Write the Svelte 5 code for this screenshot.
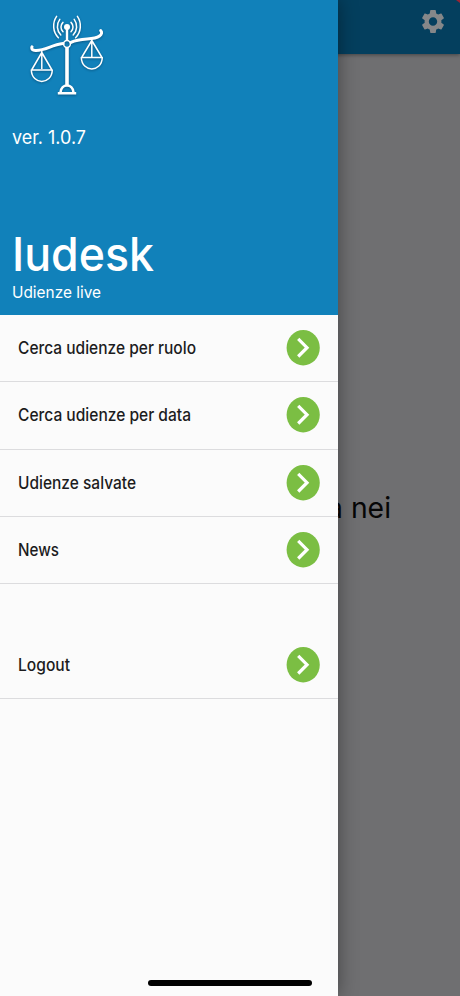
<script lang="ts">
  // Side drawer of the app, open over the dimmed home page.

  type MenuItem = {
    label: string;
    width: number;
    spaced?: boolean;
  };

  const version = "1.0.7";

  // width = rendered label width, the labels are set slightly condensed
  const items: MenuItem[] = [
    { label: "Cerca udienze per ruolo", width: 178 },
    { label: "Cerca udienze per data", width: 173 },
    { label: "Udienze salvate", width: 118 },
    { label: "News", width: 41 },
    { label: "Logout", width: 52, spaced: true },
  ];
</script>

{#snippet line(text: string, width: number, height: number, baseline: number)}
  <svg class="line" {width} {height} aria-label={text}>
    <text x="0" y={baseline} textLength={width} lengthAdjust="spacingAndGlyphs">{text}</text>
  </svg>
{/snippet}

<div class="screen">
  <div class="page">
    <header class="appbar">
      <svg class="gear" width="28" height="29" viewBox="0 0 24 24" preserveAspectRatio="none" aria-hidden="true">
        <path
          d="M19.14 12.94c.04-.3.06-.61.06-.94s-.02-.64-.07-.94l2.03-1.58c.18-.14.23-.41.12-.61l-1.92-3.32c-.12-.22-.37-.29-.59-.22l-2.39.96c-.5-.38-1.03-.7-1.62-.94l-.36-2.54c-.04-.24-.24-.41-.48-.41h-3.84c-.24 0-.43.17-.47.41l-.36 2.54c-.59.24-1.13.57-1.62.94l-2.39-.96c-.22-.08-.47 0-.59.22L2.74 8.87c-.12.21-.08.47.12.61l2.03 1.58c-.05.3-.09.63-.09.94s.02.64.07.94l-2.03 1.58c-.18.14-.23.41-.12.61l1.92 3.32c.12.22.37.29.59.22l2.39-.96c.5.38 1.03.7 1.62.94l.36 2.54c.05.24.24.41.48.41h3.84c.24 0 .44-.17.47-.41l.36-2.54c.59-.24 1.13-.56 1.62-.94l2.39.96c.22.08.47 0 .59-.22l1.92-3.32c.12-.22.07-.47-.12-.61l-2.01-1.58zM12 15.6c-1.98 0-3.6-1.62-3.6-3.6s1.62-3.6 3.6-3.6 3.6 1.62 3.6 3.6-1.62 3.6-3.6 3.6z"
        />
      </svg>
      <span class="corner"></span>
    </header>
    <div class="message">{@render line("a nei", 64, 40, 30)}</div>
  </div>

  <aside class="drawer">
    <div class="head">
      <svg class="logo" width="76" height="84" viewBox="0 0 76 84" fill="none" stroke="#fff" aria-hidden="true">
        <!-- signal waves -->
        <g stroke-width="1.5" stroke-linecap="round">
          <path d="M33 7.4a6.5 6.5 0 0 0 0 9.4M29.8 4.4a12 12 0 0 0 1 15.6M26.6 1.4a17 17 0 0 0 1.8 21.4" />
          <path d="M41 7.4a6.5 6.5 0 0 1 0 9.4M44.2 4.4a12 12 0 0 1-1 15.6M47.4 1.4a17 17 0 0 1-1.8 21.4" />
        </g>
        <circle cx="37" cy="12" r="3" fill="#fff" stroke="none" />
        <path d="M37 13v13" stroke-width="2.4" />
        <!-- beam -->
        <path
          d="M2 31.8c-.8 2.2.6 3.6 3.2 3.6C15 36 21 30 33 28.6"
          stroke-width="3"
          stroke-linecap="round"
        />
        <path
          d="M41 27.4c11-5.4 22-1.5 28.5-6.4 2.3-1.8 2.8-3.8 1.2-5.4"
          stroke-width="3"
          stroke-linecap="round"
        />
        <circle cx="37" cy="29" r="3.4" stroke-width="1.5" />
        <path d="M37 32.5V71" stroke-width="3.6" />
        <path d="M30.5 77.5c.8-9.4 12.2-9.4 13 0M27.8 78.2h18.4" stroke-width="2.6" />
        <!-- pans -->
        <g stroke-width="1.5" stroke-linejoin="round">
          <path d="M11.8 36v18M11.8 37.5 1.9 54.5M11.8 37.5l9.9 17M1.3 55h21c-.6 15.2-20.4 15.2-21 0z" />
          <path d="M61.8 24v18M61.8 25.5 51.9 42M61.8 25.5 71.7 42M51.3 42.5h21c-.6 15.2-20.4 15.2-21 0z" />
        </g>
      </svg>
      <div class="version">{@render line(`ver. ${version}`, 74, 24, 18.5)}</div>
      <div class="title">{@render line("Iudesk", 142, 55, 44)}</div>
      <div class="subtitle">{@render line("Udienze live", 89, 22, 16)}</div>
    </div>

    <nav>
      {#each items as item}
        <div class="item" class:spaced={item.spaced}>
          {@render line(item.label, item.width, 24, 17.8)}
          <svg class="go" width="34" height="36" viewBox="0 0 34 36" aria-hidden="true">
            <ellipse cx="17.2" cy="17.7" rx="16.6" ry="17.7" fill="#7bbe43" />
            <path d="M12.2 8.9 21 17.7 12.2 26.5" fill="none" stroke="#fff" stroke-width="3.2" />
          </svg>
        </div>
      {/each}
    </nav>

    <div class="home-bar"></div>
  </aside>
</div>

<style>
  :global(body) {
    margin: 0;
  }
  .screen {
    position: relative;
    width: 460px;
    height: 996px;
    overflow: hidden;
    font-family: Inter, "Liberation Sans", sans-serif;
  }
  .line {
    display: block;
    flex: none;
    overflow: visible;
    fill: currentColor;
  }
  .page {
    height: 100%;
    background: #6f6f71;
  }
  .appbar {
    position: relative;
    display: flex;
    justify-content: flex-end;
    box-sizing: border-box;
    height: 54px;
    padding: 7px 13px 0 0;
    background: #043f5e;
    box-shadow: 0 1px 4px rgba(0, 0, 0, 0.4);
  }
  .gear {
    fill: #858789;
  }
  .corner {
    position: absolute;
    top: 0;
    right: 0;
    border-top: 3px solid #9b2434;
    border-left: 4px solid transparent;
  }
  .message {
    display: flex;
    justify-content: flex-end;
    padding: 434px 69px 0 0;
    color: #060606;
    font-size: 29px;
  }
  .drawer {
    /* slides over the page */
    position: absolute;
    top: 0;
    left: 0;
    display: flex;
    flex-direction: column;
    width: 338px;
    height: 996px;
    background: #fbfbfb;
    box-shadow: 0 0 18px rgba(0, 0, 0, 0.4);
  }
  .head {
    box-sizing: border-box;
    height: 315px;
    padding: 15px 0 0 11.5px;
    background: #1181ba;
    color: #fff;
  }
  .logo {
    display: block;
    margin-left: 18.5px;
    filter: drop-shadow(0 1px 1px rgba(0, 40, 70, 0.45));
  }
  .version {
    margin-top: 26px;
    font-size: 18.5px;
  }
  .title {
    margin-top: 78px;
    font-size: 47px;
    font-weight: 500;
  }
  .subtitle {
    font-size: 16.5px;
  }
  .item {
    display: flex;
    align-items: center;
    justify-content: space-between;
    box-sizing: border-box;
    height: 67.3px;
    padding: 0 18px;
    border-bottom: 1px solid #dcdcde;
    color: #1c1c1d;
    font-size: 17px;
    font-weight: 450;
  }
  .spaced {
    margin-top: 47.5px;
  }
  .home-bar {
    width: 164px;
    height: 6px;
    margin: auto 26px 10px auto;
    border-radius: 3px;
    background: #000;
  }
</style>
